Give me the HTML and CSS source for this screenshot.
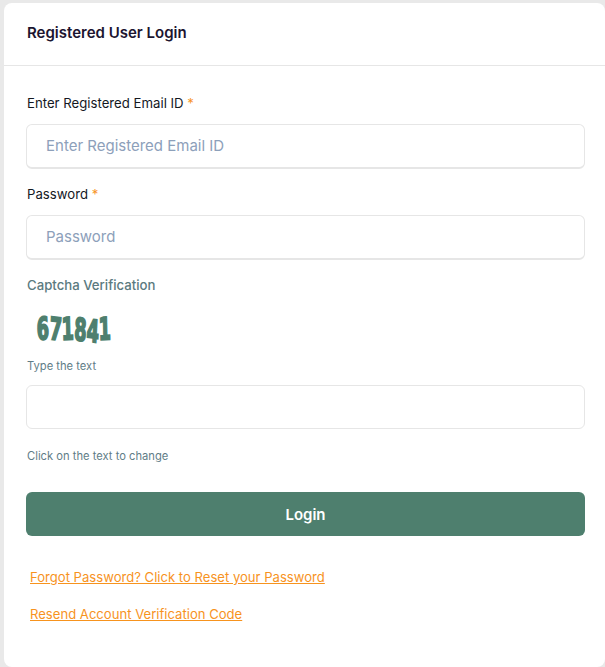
FILE: index.html
```html
<!DOCTYPE html>
<html lang="en">
<head>
  <meta charset="UTF-8" />
  <title>Registered User Login</title>
  <link rel="stylesheet" href="styles.css">
</head>
<body>

<div class="card">
  <div class="card-header">Registered User Login</div>

  <form class="card-body">
    <label class="field-label" for="email">Enter Registered Email ID <span class="req">*</span></label>
    <input class="field-input" id="email" type="text" placeholder="Enter Registered Email ID">

    <label class="field-label pass-label" for="password">Password <span class="req">*</span></label>
    <input class="field-input" id="password" type="password" placeholder="Password">

    <div class="captcha-title">Captcha Verification</div>
    <svg class="captcha-img" width="90" height="38" viewBox="0 0 90 38">
      <text x="1" y="30" textLength="74" lengthAdjust="spacingAndGlyphs" rotate="-3 4 -2 3 5 -2" dy="0 -1 1 0 1 -1">671841</text>
    </svg>
    <label class="small-text type-label" for="captcha">Type the text</label>
    <input class="field-input flat" id="captcha" type="text">
    <div class="small-text click-note">Click on the text to change</div>

    <button class="login-btn" type="button">Login</button>

    <div class="links">
      <a href="#">Forgot Password? Click to Reset your Password</a>
      <a href="#">Resend Account Verification Code</a>
    </div>
  </form>
</div>

</body>
</html>
```

FILE: styles.css
```css
* {
  box-sizing: border-box;
}

html, body {
  height: 100%;
}

body {
  margin: 0;
  padding: 3px 0 0 4px;
  background-color: #e9e9e9;
  font-family: Inter, Arial, sans-serif;
  overflow: hidden;
}

.card {
  height: 664px;
  background: white;
  border-radius: 8px;
}

.card-header {
  height: 63px;
  padding: 0 23px;
  line-height: 59px;
  font-size: 15px;
  font-weight: 600;
  color: #1c1530;
  border-bottom: 1px solid #e6e6e6;
}

.card-body {
  display: flex;
  flex-direction: column;
  padding: 27px 20px 0 22px;
}

.field-label {
  padding-left: 1px;
  font-size: 13.2px;
  line-height: 20px;
  color: #14181f;
}

.req {
  color: #f7931e;
}

.pass-label {
  margin-top: 15px;
}

.field-input {
  width: 100%;
  height: 45px;
  margin-top: 11px;
  padding: 0 19px 2px;
  font-family: inherit;
  font-size: 15px;
  color: #333;
  background: white;
  border: 1px solid #e6e6e6;
  border-bottom-width: 2px;
  border-radius: 6px;
  outline: none;
}

.field-input.flat {
  height: 44px;
  padding-bottom: 0;
  border-bottom-width: 1px;
}

.field-input::placeholder {
  color: #8da0ba;
  opacity: 1;
}

.captcha-title {
  margin-top: 15px;
  padding-left: 1px;
  font-size: 13.2px;
  font-weight: 500;
  line-height: 20px;
  color: #5b7a80;
}

.captcha-img {
  display: block;
  margin: 15px 0 0 10px;
  overflow: visible;
}

.captcha-img text {
  font-family: "DejaVu Sans", sans-serif;
  font-size: 31px;
  font-weight: bold;
  fill: #4e7f6e;
  stroke: #4e7f6e;
  stroke-width: 1.9px;
}

.small-text {
  padding-left: 1px;
  font-size: 11.2px;
  line-height: 16px;
  color: #5f7d87;
}

.type-label {
  margin-top: 10px;
}

.click-note {
  margin-top: 19px;
}

.login-btn {
  height: 44px;
  margin-top: 28px;
  font-family: inherit;
  font-size: 15px;
  font-weight: 600;
  color: white;
  background-color: #4e7f6e;
  border: none;
  border-radius: 6px;
  cursor: pointer;
}

.links {
  display: flex;
  flex-direction: column;
  align-items: flex-start;
  gap: 19px;
  margin-top: 32px;
  padding-left: 4px;
}

.links a {
  font-size: 13.1px;
  line-height: 18px;
  color: #f7931e;
}
```
